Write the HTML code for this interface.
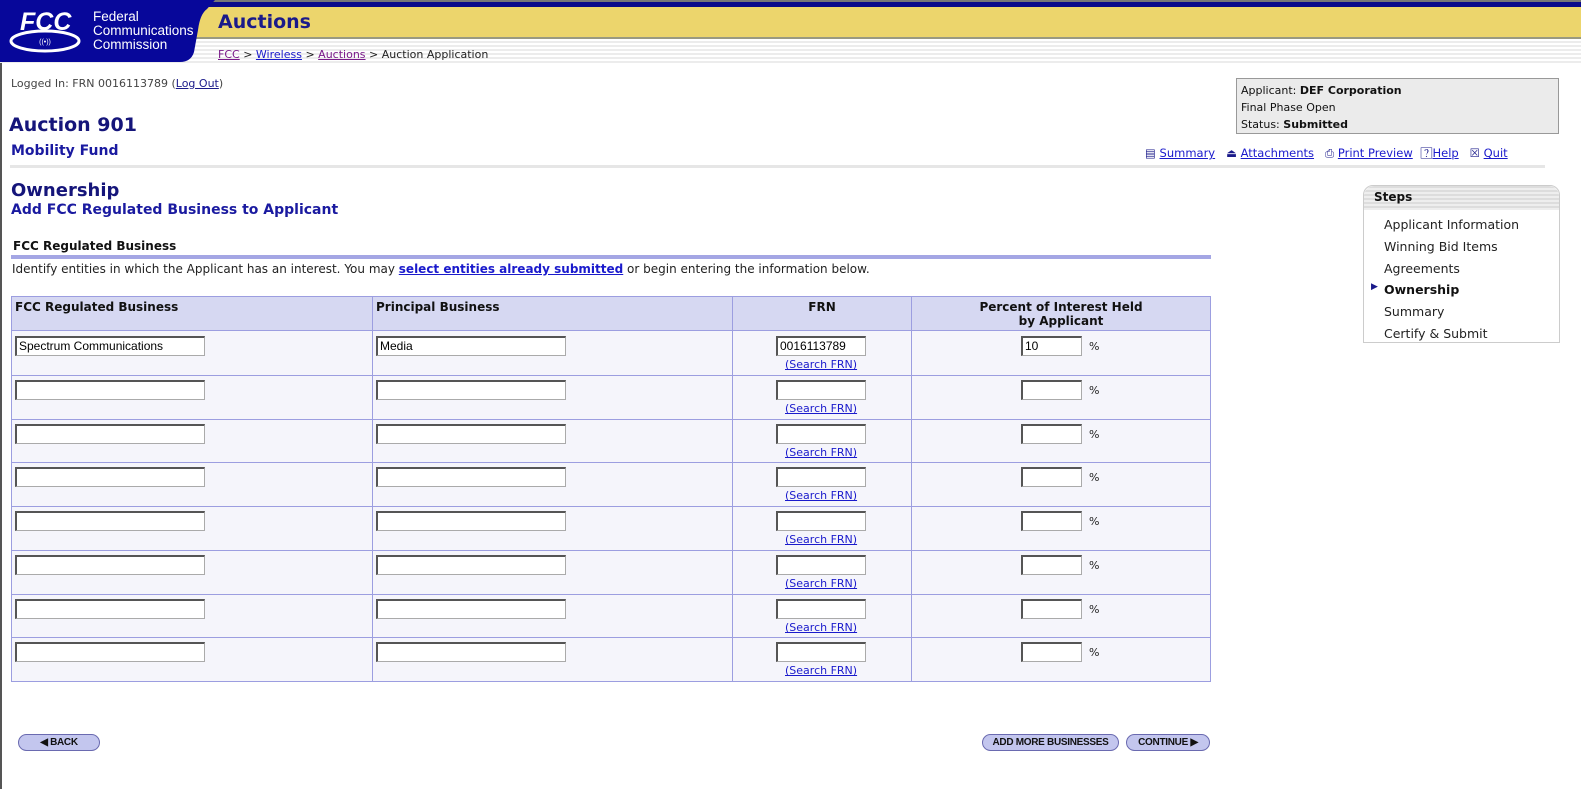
<!DOCTYPE html>
<html><head><meta charset="utf-8"><style>
*{margin:0;padding:0;box-sizing:border-box}
body{width:1581px;height:789px;background:#fff;font-family:"DejaVu Sans","Liberation Sans",sans-serif;font-size:12px;color:#222;position:relative;overflow:hidden}
.a{position:absolute;white-space:nowrap}
a{color:#1a1acc;text-decoration:underline}
.inp{position:absolute;height:20px;background:#fff;border:1px solid #aaa;border-top:2px solid #555;border-left:2px solid #555;font-family:"Liberation Sans",sans-serif;font-size:12px;padding:1px 2px;color:#000}
.btn{position:absolute;height:17px;background:#c3c6ee;border:1px solid #6a6ab0;border-radius:9px;font-family:"Liberation Sans",sans-serif;font-weight:bold;font-size:10px;letter-spacing:-0.3px;text-align:center;line-height:15px;color:#111}
</style></head><body>
<div class="a" style="left:0;top:0;width:2px;height:789px;background:#555"></div>
<!-- header -->
<div class="a" style="left:0;top:0;width:1581px;height:2px;background:#777"></div>
<div class="a" style="left:0;top:2px;width:1581px;height:5px;background:#0a0a8a"></div>
<div class="a" style="left:0;top:7px;width:1581px;height:30px;background:#ecd56c"></div>
<div class="a" style="left:0;top:37px;width:1581px;height:2px;background:#9a9a80"></div>
<div class="a" style="left:0;top:39px;width:1581px;height:24px;background:repeating-linear-gradient(#fff 0 2px,#ececec 2px 4px)"></div>
<svg class="a" style="left:0;top:0" width="215" height="64"><path d="M0 0H215L207 9Q200 14 198 30L194 52Q191 62 180 62H0Z" fill="#07079a"/>
<ellipse cx="45" cy="41" rx="34" ry="10" fill="none" stroke="#fff" stroke-width="3"/>
<text x="20" y="30" fill="#fff" font-family="Liberation Sans" font-weight="bold" font-style="italic" font-size="25">FCC</text>
<text x="45" y="44" fill="#fff" font-size="7" text-anchor="middle" font-family="Liberation Sans">((•))</text>
<text x="93" y="21" fill="#fff" font-family="Liberation Sans" font-size="13.5">Federal</text>
<text x="93" y="35" fill="#fff" font-family="Liberation Sans" font-size="13.5">Communications</text>
<text x="93" y="49" fill="#fff" font-family="Liberation Sans" font-size="13.5">Commission</text></svg>
<div class="a" style="left:218px;top:11px;font-size:19px;font-weight:bold;color:#1a1a8a">Auctions</div>
<div class="a" style="left:218px;top:48px;font-size:11px;color:#222"><a style="color:#7a1a8a">FCC</a> &gt; <a>Wireless</a> &gt; <a style="color:#7a1a8a">Auctions</a> &gt; Auction Application</div>
<div class="a" style="left:11px;top:77px;font-size:11px;color:#444">Logged In: FRN 0016113789 (<a style="color:#1a1a8a">Log Out</a>)</div>
<div class="a" style="left:9px;top:114px;font-size:19px;font-weight:bold;color:#15157a">Auction 901</div>
<div class="a" style="left:11px;top:143px;font-size:14px;font-weight:bold;color:#1a1aa0">Mobility Fund</div>
<div class="a" style="left:10px;top:165px;width:1535px;height:3px;background:#e6e6e6"></div>
<div class="a" style="left:1236px;top:78px;width:323px;height:56px;background:#ebebeb;border:1px solid #999;padding:3px 4px;font-size:11px;line-height:17px;color:#111">Applicant: <b>DEF Corporation</b><br>Final Phase Open<br>Status: <b>Submitted</b></div>
<div class="a" style="left:1145px;top:146px;font-size:11.5px;color:#1a1acc">
<span style="color:#1a1a8a">▤</span> <a>Summary</a> &nbsp; <span style="color:#1a1a8a">⏏</span> <a>Attachments</a> &nbsp; <span style="color:#1a1a8a">⎙</span> <a>Print Preview</a> &nbsp; <span style="color:#1a1a8a">?⃞</span> <a>Help</a> &nbsp; <span style="color:#1a1a8a">☒</span> <a>Quit</a></div>
<div class="a" style="left:11px;top:180px;font-size:18px;font-weight:bold;color:#15157a">Ownership</div>
<div class="a" style="left:11px;top:202px;font-size:14px;font-weight:bold;color:#1a1aa0">Add FCC Regulated Business to Applicant</div>
<div class="a" style="left:13px;top:239px;font-size:12px;font-weight:bold;color:#111">FCC Regulated Business</div>
<div class="a" style="left:11px;top:255px;width:1200px;height:4px;background:#a4a6e4"></div>
<div class="a" style="left:12px;top:262px;font-size:12px;color:#222">Identify entities in which the Applicant has an interest. You may <a style="font-weight:bold">select entities already submitted</a> or begin entering the information below.</div>
<!-- steps -->
<div class="a" style="left:1363px;top:185px;width:197px;height:158px;border:1px solid #ccc;border-radius:10px 10px 0 0;background:#fff"></div>
<div class="a" style="left:1364px;top:186px;width:195px;height:24px;border-radius:10px 10px 0 0;background:repeating-linear-gradient(#ddd 0 2px,#eee 2px 4px)"></div>
<div class="a" style="left:1374px;top:190px;font-weight:bold;font-size:12px;color:#111">Steps</div>
<div class="a" style="left:1384px;top:214px;font-size:12.5px;line-height:21.8px;color:#222">Applicant Information<br>Winning Bid Items<br>Agreements<br><b style="color:#111">Ownership</b><br>Summary<br>Certify &amp; Submit</div>
<div class="a" style="left:1371px;top:282px;font-size:9px;color:#1a1a8a">▶</div>
<!-- table -->
<div class="a" style="left:11px;top:296px;width:1200px;height:386px;background:#f5f5fb;border:1px solid #9c9ee0"></div>
<div class="a" style="left:12px;top:297px;width:1198px;height:34px;background:#d6d8f2;border-bottom:1px solid #9c9ee0"></div>
<div class="a" style="left:372px;top:296px;width:1px;height:386px;background:#9c9ee0"></div>
<div class="a" style="left:732px;top:296px;width:1px;height:386px;background:#9c9ee0"></div>
<div class="a" style="left:911px;top:296px;width:1px;height:386px;background:#9c9ee0"></div>
<div class="a" style="left:15px;top:300px;font-weight:bold;color:#111">FCC Regulated Business</div>
<div class="a" style="left:376px;top:300px;font-weight:bold;color:#111">Principal Business</div>
<div class="a" style="left:733px;top:300px;width:178px;text-align:center;font-weight:bold;color:#111">FRN</div>
<div class="a" style="left:912px;top:300px;width:298px;text-align:center;font-weight:bold;color:#111;line-height:14px">Percent of Interest Held<br>by Applicant</div>
<div id="rows"></div>
<script>
var h='';var vals=[['Spectrum Communications','Media','0016113789','10']];
for(var i=0;i<8;i++){var y=331+i*43.75;var v=vals[i]||['','','',''];
if(i>0)h+='<div class="a" style="left:12px;top:'+Math.round(y)+'px;width:1198px;height:1px;background:#9c9ee0"></div>';
var t=Math.round(y+5);
h+='<div class="inp" style="left:15px;top:'+t+'px;width:190px">'+v[0]+'</div>';
h+='<div class="inp" style="left:376px;top:'+t+'px;width:190px">'+v[1]+'</div>';
h+='<div class="inp" style="left:776px;top:'+t+'px;width:90px">'+v[2]+'</div>';
h+='<div class="inp" style="left:1021px;top:'+t+'px;width:61px">'+v[3]+'</div>';
h+='<div class="a" style="left:1089px;top:'+(t+4)+'px;font-size:11px">%</div>';
h+='<div class="a" style="left:785px;top:'+(t+22)+'px;font-size:11px"><a>(Search FRN)</a></div>';}
document.getElementById('rows').outerHTML=h;
</script>
<div class="btn" style="left:18px;top:734px;width:82px">◀ BACK</div>
<div class="btn" style="left:982px;top:734px;width:137px">ADD MORE BUSINESSES</div>
<div class="btn" style="left:1126px;top:734px;width:84px">CONTINUE ▶</div>
</body></html>
